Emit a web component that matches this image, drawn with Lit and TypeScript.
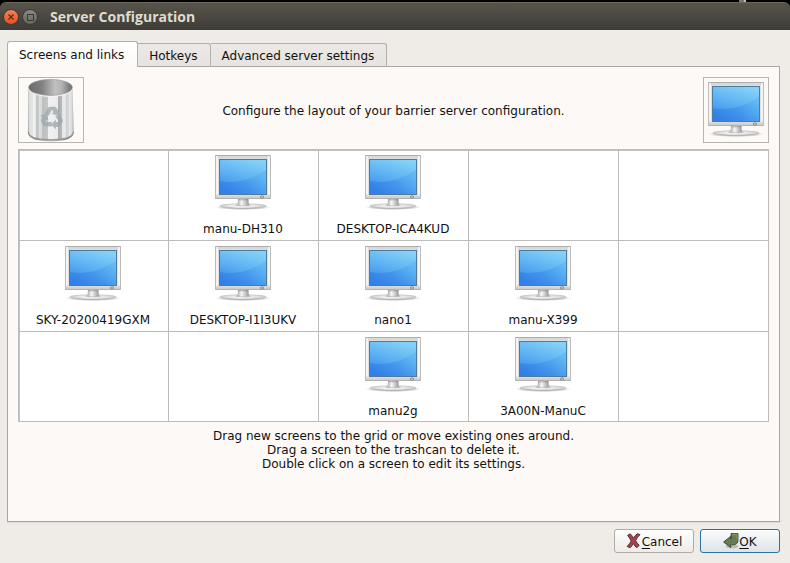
import { LitElement, html, css, svg, nothing } from "lit";
import { customElement, property, state } from "lit/decorators.js";
import { classMap } from "lit/directives/class-map.js";

@customElement("monitor-icon")
class MonitorIcon extends LitElement {
  static styles = css`
    :host { display: block; width: 56px; height: 56px; }
    svg { display: block; }
  `;
  render() {
    return html`<svg width="56" height="56" viewBox="0 0 56 56" aria-hidden="true">
      <defs>
        <linearGradient id="glow" x1="0.75" y1="0" x2="0.35" y2="1">
          <stop offset="0" stop-color="#84d2f8" />
          <stop offset="0.5" stop-color="#5fb2f2" />
          <stop offset="1" stop-color="#3a8aea" />
        </linearGradient>
        <linearGradient id="lower" x1="0" y1="0.7" x2="1" y2="0.3">
          <stop offset="0" stop-color="#2a79e4" />
          <stop offset="0.5" stop-color="#3a8ceb" />
          <stop offset="1" stop-color="#5ab6f4" />
        </linearGradient>
        <linearGradient id="bezel" x1="0" y1="0" x2="0" y2="1">
          <stop offset="0" stop-color="#d4d4d4" />
          <stop offset="0.1" stop-color="#dedede" />
          <stop offset="0.9" stop-color="#e0e0e0" />
          <stop offset="1" stop-color="#c6c6c6" />
        </linearGradient>
        <linearGradient id="neck" x1="0" y1="0" x2="1" y2="0">
          <stop offset="0" stop-color="#b0b0b0" />
          <stop offset="0.35" stop-color="#f6f6f6" />
          <stop offset="0.6" stop-color="#d4d4d4" />
          <stop offset="1" stop-color="#989898" />
        </linearGradient>
        <linearGradient id="base" x1="0" y1="0" x2="1" y2="0">
          <stop offset="0" stop-color="#d0d0d0" />
          <stop offset="0.45" stop-color="#fcfcfc" />
          <stop offset="1" stop-color="#d0d0d0" />
        </linearGradient>
        <radialGradient id="shade">
          <stop offset="0" stop-color="#555" stop-opacity="0.7" />
          <stop offset="0.7" stop-color="#777" stop-opacity="0.4" />
          <stop offset="1" stop-color="#999" stop-opacity="0" />
        </radialGradient>
      </defs>
      <ellipse cx="28" cy="52.2" rx="28" ry="2.8" fill="url(#shade)" />
      <ellipse cx="28" cy="50.9" rx="23" ry="2.1" fill="url(#base)" stroke="#b0b0b0" stroke-width="0.6" />
      <ellipse cx="28" cy="50.1" rx="8" ry="1.2" fill="#9a9a9a" opacity="0.6" />
      <path d="M23 43.5h10.4l0.4 6.3q-5.6 1.2-11.2 0z" fill="url(#neck)" />
      <path d="M23 43.8h10.4v1.6h-10.4z" fill="#777" opacity="0.4" />
      <path d="M0 0H56V43.4Q56 44 55 44H1Q0 44 0 43.4z" fill="url(#bezel)" />
      <path d="M0 0.5H56" stroke="#adaeae" />
      <path d="M0.5 0V43.5M55.5 0V43.5" stroke="#bcbcbc" />
      <path d="M2 1V39.5M54 1V39.5" stroke="#fdfdfd" stroke-width="1.4" />
      <path d="M0.5 43.5H55.5" stroke="#b3b3b3" />
      <rect x="4" y="4" width="48" height="36" fill="#4f7c9e" />
      <rect x="5" y="5" width="46" height="34" fill="url(#glow)" />
      <path d="M5 26Q28 30.5 51 15V39H5z" fill="url(#lower)" opacity="0.6" />
      <ellipse cx="47" cy="42" rx="1.7" ry="1.2" fill="#d6d6d6" stroke="#7a7a7a" stroke-width="0.8" />
    </svg>`;
  }
}

@customElement("trash-icon")
class TrashIcon extends LitElement {
  static styles = css`
    :host { display: block; width: 64px; height: 64px; }
    svg { display: block; }
  `;
  render() {
    const arrow = (turn: number) => svg`<path
      transform="rotate(${turn})"
      d="M-7.4 -4.2L-4 -10Q-3.2 -11.2 -1.8 -11.2H2.2Q3.8 -11.2 4.6 -9.8L5.8 -7.8L8 -9L6 -2.6L-0.6 -4.2L1.6 -5.4L-0.2 -8.4L-3 -2.2z" />`;
    return html`<svg width="64" height="64" viewBox="0 0 64 64" aria-hidden="true">
      <defs>
        <linearGradient id="metal" x1="0" y1="0" x2="1" y2="0">
          <stop offset="0" stop-color="#9b9d9d" />
          <stop offset="0.03" stop-color="#dcdddd" />
          <stop offset="0.11" stop-color="#e6e7e7" />
          <stop offset="0.13" stop-color="#f4f5f5" />
          <stop offset="0.17" stop-color="#e4e5e5" />
          <stop offset="0.18" stop-color="#c2c4c4" />
          <stop offset="0.23" stop-color="#c8caca" />
          <stop offset="0.24" stop-color="#dfe0e1" />
          <stop offset="0.31" stop-color="#d6d8d8" />
          <stop offset="0.32" stop-color="#bcbebe" />
          <stop offset="0.43" stop-color="#c4c6c7" />
          <stop offset="0.44" stop-color="#eff1f2" />
          <stop offset="0.65" stop-color="#eaeced" />
          <stop offset="0.66" stop-color="#a9abac" />
          <stop offset="0.74" stop-color="#b8babb" />
          <stop offset="0.75" stop-color="#e4e6e7" />
          <stop offset="0.82" stop-color="#e9ebec" />
          <stop offset="0.83" stop-color="#cfd2d4" />
          <stop offset="0.9" stop-color="#d6d9db" />
          <stop offset="0.91" stop-color="#e6e8e9" />
          <stop offset="0.97" stop-color="#d4d6d6" />
          <stop offset="1" stop-color="#979999" />
        </linearGradient>
        <linearGradient id="inside" x1="0" y1="0" x2="1" y2="0">
          <stop offset="0" stop-color="#6b6b6b" />
          <stop offset="0.3" stop-color="#808080" />
          <stop offset="0.6" stop-color="#c0c0c0" />
          <stop offset="0.75" stop-color="#b4b4b4" />
          <stop offset="1" stop-color="#6a6a6a" />
        </linearGradient>
        <linearGradient id="foot" x1="0" y1="0" x2="1" y2="0">
          <stop offset="0" stop-color="#777" />
          <stop offset="0.5" stop-color="#b0b0b0" />
          <stop offset="1" stop-color="#707070" />
        </linearGradient>
      </defs>
      <path d="M8.8 54Q8.8 63.2 31.8 63.2T54.8 54z" fill="url(#foot)" />
      <path d="M9.4 10L9 53.6Q9.4 61.8 31.8 61.8T54.6 53.6L53.6 10z" fill="url(#metal)" />
      <path d="M9 53.4Q9.4 61.6 31.8 61.6T54.6 53.4" fill="none" stroke="#8d8f8f" stroke-width="0.8" />
      <ellipse cx="31.5" cy="10.2" rx="22.3" ry="8.6" fill="#f5f5f5" />
      <ellipse cx="31.5" cy="9.4" rx="21.8" ry="8" fill="url(#inside)" stroke="#999" stroke-width="0.7" />
      <g fill="#a0a9ad" opacity="0.8" transform="translate(33 40)">${arrow(0)}${arrow(120)}${arrow(240)}</g>
    </svg>`;
  }
}

@customElement("screen-grid")
class ScreenGrid extends LitElement {
  @property({ attribute: false }) rows: string[][] = [];
  static styles = css`
    :host { display: block; }
    table {
      width: 100%;
      table-layout: fixed;
      border-collapse: collapse;
      background: #fff;
      box-shadow: inset 2px 2px 0 #c4c2c0;
    }
    td {
      height: 91px;
      box-sizing: border-box;
      padding: 0;
      border: 1px solid #bebcbb;
      vertical-align: top;
    }
    tr:last-child td { height: 90px; }
    .screen {
      display: flex;
      flex-direction: column;
      align-items: center;
      gap: 10px;
      padding: 5px 1px 0 0;
    }
    .name { line-height: 16px; white-space: nowrap; }
  `;
  render() {
    return html`<table aria-label="Screens">
      <tbody>
        ${this.rows.map((row) => html`<tr>
          ${row.map((name) => html`<td>${name
            ? html`<div class="screen" draggable="true"><monitor-icon></monitor-icon><span class="name">${name}</span></div>`
            : nothing}</td>`)}
        </tr>`)}
      </tbody>
    </table>`;
  }
}

@customElement("app-root")
class AppRoot extends LitElement {
  @state() private tab = 0;
  private tabs = ["Screens and links", "Hotkeys", "Advanced server settings"];
  private screens = [
    ["", "manu-DH310", "DESKTOP-ICA4KUD", "", ""],
    ["SKY-20200419GXM", "DESKTOP-I1I3UKV", "nano1", "manu-X399", ""],
    ["", "", "manu2g", "3A00N-ManuC", ""],
  ];

  static styles = css`
    :host {
      display: flex;
      flex-direction: column;
      min-height: 100vh;
      box-sizing: border-box;
      background: #efebe7;
      font: 12px/14px "DejaVu Sans", sans-serif;
      color: #111;
    }
    button { font: inherit; color: inherit; margin: 0; }
    .desktop { height: 2px; background: #000; display: flex; justify-content: flex-end; padding-right: 44px; }
    .sliver { width: 7px; background: linear-gradient(90deg, #777 70%, #bbb 70%); }
    .backing { background: #000; }
    .titlebar {
      height: 28px;
      box-sizing: border-box;
      display: flex;
      align-items: center;
      gap: 3px;
      padding: 0 3px;
      border-top: 1px solid #6b675e;
      border-radius: 6px 6px 0 0;
      background: linear-gradient(#57544b, #3d3c37);
    }
    .wm { width: 16px; height: 16px; padding: 0; border: 0; background: none; }
    .wm svg { display: block; }
    h1 {
      margin: 0 0 0 9px;
      font: bold 14px/20px "Open Sans", "Noto Sans", sans-serif;
      color: #dfdbd2;
    }
    .content { flex: 1; display: flex; flex-direction: column; padding: 11px 10px 10px 7px; }
    .tabs { display: flex; align-items: flex-end; }
    .tab {
      height: 23px;
      box-sizing: border-box;
      padding: 1px 12px 0 11px;
      border: 1px solid #b3afab;
      border-width: 1px 1px 0 0;
      border-radius: 0 3px 0 0;
      background: linear-gradient(#ebe8e5, #e6e3e0);
      white-space: nowrap;
    }
    .tab.active {
      height: 26px;
      padding: 0 13px 0 11px;
      border-left-width: 1px;
      border-radius: 3px 3px 0 0;
      background: linear-gradient(#fff, #fdf9f6);
      margin-bottom: -1px;
      position: relative;
      z-index: 1;
    }
    .panel {
      flex: 1;
      border: 1px solid #aaa6a2;
      background: #fdf9f6;
      box-shadow: 0 1px 0 #dedad6;
      padding: 10px;
      display: flex;
      flex-direction: column;
    }
    .head { display: flex; align-items: center; justify-content: space-between; margin-bottom: 6px; }
    .well {
      width: 66px;
      height: 66px;
      box-sizing: border-box;
      border: 1px solid #b9b5b1;
      display: flex;
      align-items: center;
      justify-content: center;
    }
    p { margin: 0; text-align: center; }
    .intro { padding-top: 2px; }
    .help { margin-top: 7px; }
    .actions { display: flex; justify-content: flex-end; gap: 6px; margin-top: 7px; }
    .action {
      width: 80px;
      height: 24px;
      padding: 1px 0 0;
      display: flex;
      align-items: center;
      justify-content: center;
      border: 1px solid #b0aca8;
      border-radius: 3px;
      background: linear-gradient(#fefefe, #eeebe8);
    }
    .action.default { border-color: #2a729b; background: linear-gradient(#fbfcfd, #dde3e7); }
    .action svg { margin-bottom: 1px; }
    .key { text-decoration: underline; text-underline-offset: 2px; }
  `;

  render() {
    return html`
      <div class="desktop"><div class="sliver"></div></div>
      <div class="backing">
        <header class="titlebar">
          <button class="wm" aria-label="Close">
            <svg width="16" height="16" viewBox="0 0 16 16">
              <defs><linearGradient id="c" x1="0" y1="0" x2="0" y2="1"><stop offset="0" stop-color="#f68358" /><stop offset="1" stop-color="#e2501f" /></linearGradient></defs>
              <circle cx="8" cy="8" r="7.5" fill="url(#c)" stroke="#3a3833" />
              <path d="M5.5 5.5l5 5M10.5 5.5l-5 5" stroke="#5b2410" stroke-width="1.1" />
            </svg>
          </button>
          <button class="wm" aria-label="Maximize">
            <svg width="16" height="16" viewBox="0 0 16 16">
              <defs><linearGradient id="m" x1="0" y1="0" x2="0" y2="1"><stop offset="0" stop-color="#8d8a83" /><stop offset="1" stop-color="#66635c" /></linearGradient></defs>
              <circle cx="8" cy="8" r="7.5" fill="url(#m)" stroke="#3a3833" />
              <rect x="5.5" y="5.5" width="6" height="6" fill="none" stroke="#3a3833" />
            </svg>
          </button>
          <h1>Server Configuration</h1>
        </header>
      </div>
      <main class="content">
        <div class="tabs" role="tablist">
          ${this.tabs.map((label, i) => html`<button
            role="tab"
            aria-selected=${i === this.tab ? "true" : "false"}
            class=${classMap({ tab: true, active: i === this.tab })}
            @click=${() => { this.tab = i; }}
          >${label}</button>`)}
        </div>
        <section class="panel" role="tabpanel">
          ${this.tab === 0 ? html`
            <div class="head">
              <div class="well"><trash-icon></trash-icon></div>
              <p class="intro">Configure the layout of your barrier server configuration.</p>
              <div class="well"><monitor-icon draggable="true"></monitor-icon></div>
            </div>
            <screen-grid .rows=${this.screens}></screen-grid>
            <p class="help">
              Drag new screens to the grid or move existing ones around.<br />
              Drag a screen to the trashcan to delete it.<br />
              Double click on a screen to edit its settings.
            </p>` : nothing}
        </section>
        <div class="actions">
          <button class="action">
            <svg width="16" height="16" viewBox="0 0 16 16" aria-hidden="true">
              <path d="M1.6 2.4L4.2 0.8Q6 2.4 7.4 5.2Q9 2.2 11.4 0.8L14 1.6Q11 4.6 9.6 7.6Q11 10.4 13.2 12.2L10.8 14.8Q8.8 13.2 7.4 10.6Q6 13 4 14.8L1.2 13.4Q3.8 10.8 5.2 8Q3.8 4.8 1.6 2.4z" fill="#a8434d" stroke="#4a2226" stroke-width="0.9" stroke-linejoin="round" />
            </svg>
            <span><span class="key">C</span>ancel</span>
          </button>
          <button class="action default">
            <svg width="16" height="16" viewBox="0 0 16 16" aria-hidden="true">
              <ellipse cx="9" cy="13.4" rx="6.5" ry="2" fill="#666" opacity="0.35" />
              <path d="M8 0.6H15V6.8Q15 11.4 10.6 11.8H7.6V14.4L0.6 9L7.6 3.4V6.2H8z" fill="#687c54" stroke="#39452f" stroke-width="0.9" stroke-linejoin="round" />
              <path d="M9 1.6H14V6.6" fill="none" stroke="#93a57f" stroke-width="0.8" />
            </svg>
            <span><span class="key">O</span>K</span>
          </button>
        </div>
      </main>
    `;
  }
}
